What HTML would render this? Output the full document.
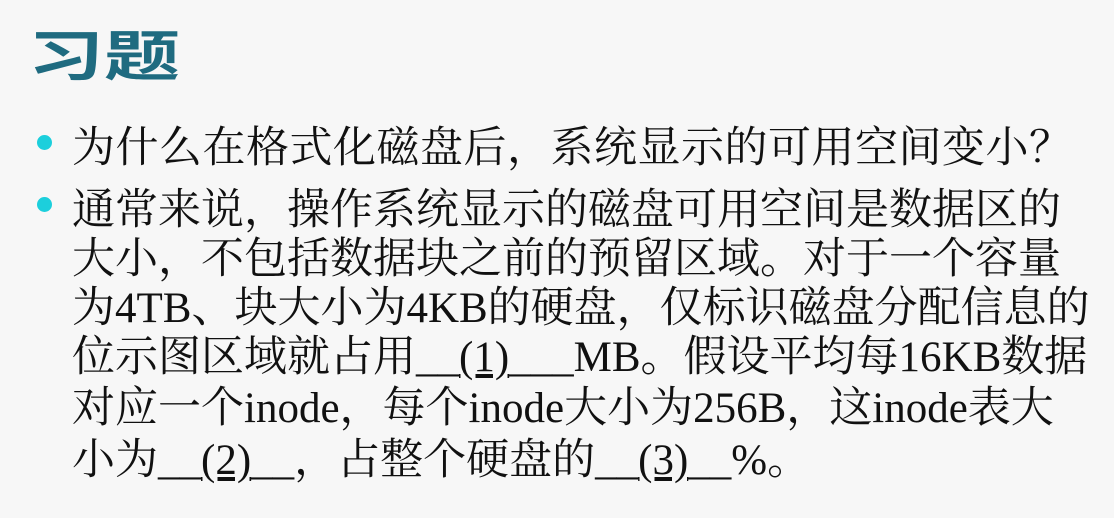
<!DOCTYPE html>
<html><head><meta charset="utf-8"><style>
body{margin:0;width:1114px;height:518px;background:#f7f7f7;overflow:hidden;position:relative;font-family:"Liberation Serif","Noto Serif CJK SC",serif;color:#111}
.t{position:absolute;left:28px;top:11px;font-size:76px;line-height:90px;font-weight:bold;color:#1f6b80;font-family:"Liberation Sans","Noto Sans CJK SC",sans-serif;transform:scaleY(0.72);transform-origin:0 50px}
.l{position:absolute;left:72px;font-size:43px;line-height:49px;white-space:nowrap}
.b{position:absolute;left:37px;width:15px;height:15px;border-radius:50%;background:#1ccfdc}
</style></head><body>
<div class="t">习题</div>
<div class="b" style="top:135px"></div>
<div class="b" style="top:197px"></div>
<div class="l" style="top:124px;letter-spacing:0.5px">为什么在格式化磁盘后，系统显示的可用空间变小？</div>
<div class="l" style="top:186px">通常来说，操作系统显示的磁盘可用空间是数据区的</div>
<div class="l" style="top:235px">大小，不包括数据块之前的预留区域。对于一个容量</div>
<div class="l" style="top:284px">为4TB、块大小为4KB的硬盘，仅标识磁盘分配信息的</div>
<div class="l" style="top:333px">位示图区域就占用__<u>(1)</u>___MB。假设平均每16KB数据</div>
<div class="l" style="top:384px">对应一个inode，每个inode大小为256B，这inode表大</div>
<div class="l" style="top:436px">小为__<u>(2)</u>__，占整个硬盘的__<u>(3)</u>__%。</div>
</body></html>
